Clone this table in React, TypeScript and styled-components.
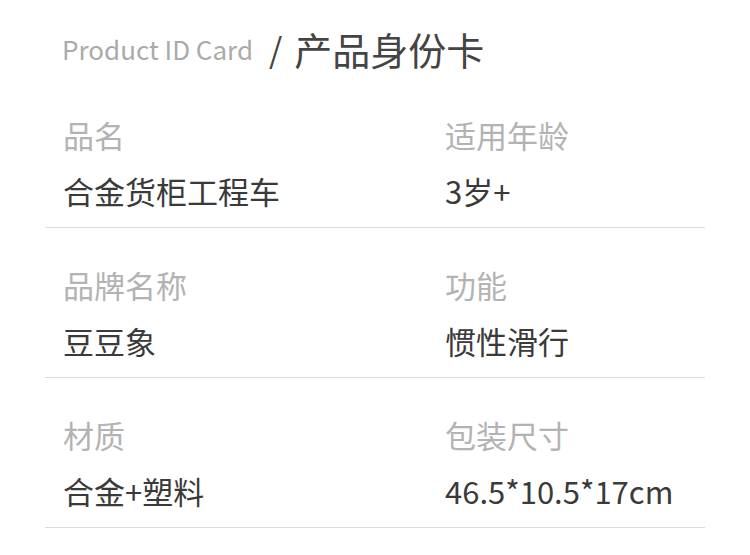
import React from 'react'
import styled, { createGlobalStyle } from 'styled-components'

const GlobalStyle = createGlobalStyle`
    html, body {
        margin: 0;
        padding: 0;
        background: #fff;
    }
    body {
        font-family: "Noto Sans CJK SC", "Noto Sans", sans-serif;
    }
`

interface ISpec {
    label: string
    value: string
}

const specRows: ISpec[][] = [
    [
        { label: '品名', value: '合金货柜工程车' },
        { label: '适用年龄', value: '3岁+' }
    ],
    [
        { label: '品牌名称', value: '豆豆象' },
        { label: '功能', value: '惯性滑行' }
    ],
    [
        { label: '材质', value: '合金+塑料' },
        { label: '包装尺寸', value: '46.5*10.5*17cm' }
    ]
]

const App = function (): JSX.Element {
    return (
        <StyledCard>
            <GlobalStyle />
            <Header>
                <EnTitle>Product ID Card</EnTitle>
                <Slash>/</Slash>
                <CnTitle>产品身份卡</CnTitle>
            </Header>
            {specRows.map((row, i) => (
                <SpecRow key={i}>
                    {row.map(spec => (
                        <SpecItem key={spec.label}>
                            <SpecLabel>{spec.label}</SpecLabel>
                            <SpecValue>{spec.value}</SpecValue>
                        </SpecItem>
                    ))}
                </SpecRow>
            ))}
        </StyledCard>
    )
}

export default App

const StyledCard = styled.div`
    width: 660px;
    margin: 0 0 0 45px;
    padding-top: 23px;
`

const Header = styled.div`
    display: flex;
    align-items: center;
    height: 52px;
    padding-left: 17px;
    margin-bottom: 3px;
`

const EnTitle = styled.span`
    font-size: 26px;
    color: #aaaaaa;
    line-height: 1;
`

const Slash = styled.span`
    font-size: 34px;
    color: #444;
    margin: 0 12px 0 16px;
    line-height: 1;
`

const CnTitle = styled.span`
    font-size: 38px;
    color: #444;
    line-height: 1;
`

const SpecRow = styled.div`
    display: grid;
    grid-template-columns: 382px 1fr;
    padding: 37px 0 0 18px;
    height: 150px;
    box-sizing: border-box;
    border-bottom: 1px solid #dcdcdc;
`

const SpecItem = styled.div`
    display: flex;
    flex-direction: column;
    gap: 16px;
`

const SpecLabel = styled.div`
    font-size: 31px;
    line-height: 40px;
    color: #b3b3b3;
`

const SpecValue = styled.div`
    font-size: 31px;
    line-height: 40px;
    color: #3a3a3a;
`
